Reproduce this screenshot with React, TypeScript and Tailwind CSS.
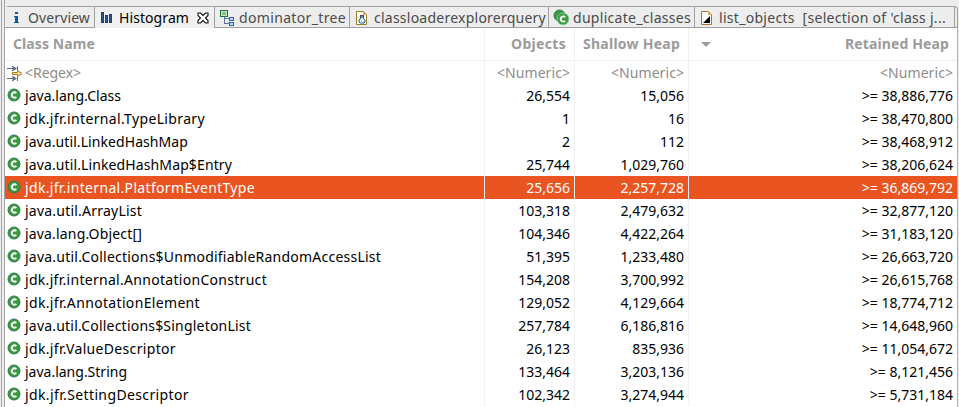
import { useLayoutEffect, useRef, type ReactNode } from "react";

// Spreads or tightens the letters so that a label takes exactly `w` pixels.
function Fit({ text, w }: { text: string; w: number }) {
  const ref = useRef<HTMLSpanElement>(null);
  useLayoutEffect(() => {
    const el = ref.current;
    if (!el) return;
    el.style.letterSpacing = "0px";
    const natural = el.getBoundingClientRect().width;
    const gap = (w - natural) / text.length;
    el.style.letterSpacing = `${gap}px`;
  }, [text, w]);
  return (
    <span ref={ref} className="inline-block whitespace-pre">
      {text}
    </span>
  );
}

function InfoIcon() {
  return (
    <svg width="16" height="16" viewBox="0 0 16 16" shapeRendering="crispEdges">
      <path d="M7 2h3v2H7zM6 6h4v6h1v1H6v-1h1V7H6z" fill="#14569f" />
    </svg>
  );
}

function HistogramIcon() {
  return (
    <svg width="16" height="16" viewBox="0 0 16 16" shapeRendering="crispEdges">
      <path d="M2 2h3v11H2zM6 5h3v8H6zM10 4h3v9h-3z" fill="#1d3c78" />
      <path d="M3 3h1v9H3zM7 6h1v6H7zM11 5h1v7h-1z" fill="#345c9c" />
    </svg>
  );
}

function CloseIcon() {
  return (
    <svg width="12" height="12" viewBox="0 0 12 12" fill="#fff" stroke="#111" strokeWidth="1.100">
      <path d="M1 1h2.500L6 3.500 8.500 1H11v2.500L8.500 6 11 8.500V11H8.500L6 8.500 3.500 11H1V8.500L3.500 6 1 3.500z" />
    </svg>
  );
}

function TreeIcon() {
  return (
    <svg width="16" height="16" viewBox="0 0 16 16">
      <path d="M5.500 7v7M5.500 8.500H10M5.500 13.500H10" fill="none" stroke="#60728f" />
      <rect x="1.500" y="0.500" width="7" height="6" fill="#c4e8c6" stroke="#27713c" />
      <rect x="3" y="2" width="4" height="3" fill="#7cc284" />
      <rect x="10.500" y="7.500" width="4" height="3" fill="#b8def8" stroke="#2b62b5" />
      <rect x="10.500" y="12.500" width="4" height="3" fill="#b8def8" stroke="#2b62b5" />
    </svg>
  );
}

function QueryIcon() {
  return (
    <svg width="16" height="16" viewBox="0 0 16 16">
      <path d="M2.500 1.500h7l3 3v10h-10z" fill="#fff" stroke="#9c7a2c" />
      <path d="M9 1l4 4H9z" fill="#d9b35f" />
      <path d="M6 5h4v3H6z" fill="#7b3b22" />
      <path d="M7 6h2v2l2 2v2l-1 1H6l-1-1v-2l2-2z" fill="#d6ecff" stroke="#245a9c" />
    </svg>
  );
}

function ObjectsIcon() {
  return (
    <svg width="16" height="16" viewBox="0 0 16 16">
      <path d="M2.500 1.500h7l3 3v10h-10z" fill="#fff" stroke="#9c7a2c" />
      <path d="M9 1l4 4H9z" fill="#d9b35f" />
      <path d="M11 6v7H4z" fill="#000" />
    </svg>
  );
}

function ClassIcon() {
  return (
    <svg className="-mt-0.5" width="14" height="14" viewBox="0 0 14 14">
      <circle cx="7" cy="7" r="6" fill="#3c9a45" stroke="#2b7a4b" />
      <path d="M9.300 5.100A2.600 2.700 0 1 0 9.300 8.900" fill="none" stroke="#fff" strokeWidth="1.900" />
    </svg>
  );
}

function ClassesIcon() {
  return (
    <svg className="shrink-0" width="17" height="17" viewBox="0 0 17 17">
      <circle cx="6.500" cy="6.500" r="5.500" fill="#3c9a45" stroke="#2b7a4b" />
      <circle cx="10" cy="10" r="6" fill="#3c9a45" stroke="#a5d3a8" strokeWidth="0.700" />
      <path d="M12.200 8.100A2.600 2.700 0 1 0 12.200 11.900" fill="none" stroke="#fff" strokeWidth="1.800" />
    </svg>
  );
}

function FilterIcon() {
  return (
    <svg width="16" height="16" viewBox="0 0 16 16" fill="none">
      <path d="M0 3.500h8M0 13.500h8M10.500 1v5M10.500 11v5M5.500 1v1.500M5.500 4.500V6M5.500 11v1.500M5.500 14.500V16" stroke="#5c6f86" />
      <path d="M6 1l4 2.500L6 6zM6 11l4 2.500L6 16z" fill="#5c6f86" />
      <path d="M5.500 7.500h5v-2l4.500 3-4.500 3v-2h-5z" fill="#f7e09a" stroke="#ac7d20" />
    </svg>
  );
}

type TabProps = { icon: ReactNode; text: string; w: number; box: string; active?: boolean; close?: boolean };

function Tab({ icon, text, w, box, active, close }: TabProps) {
  return (
    <div
      className={`flex h-full shrink-0 items-center border-r border-[#a0a0a0] pt-px ${box} ${
        active ? "bg-[#f0f0f0] text-black" : "border-b bg-[#ededed] text-[#4a4a4a]"
      }`}
    >
      <span className="flex w-5 shrink-0 items-center">{icon}</span>
      <Fit text={text} w={w} />
      {close && (
        <span className="ml-2">
          <CloseIcon />
        </span>
      )}
    </div>
  );
}

const rows: [string, number, string, string, string][] = [
  ["java.lang.Class", 96, "26,554", "15,056", "38,886,776"],
  ["jdk.jfr.internal.TypeLibrary", 180, "1", "16", "38,470,800"],
  ["java.util.LinkedHashMap", 163, "2", "112", "38,468,912"],
  ["java.util.LinkedHashMap$Entry", 207, "25,744", "1,029,760", "38,206,624"],
  ["jdk.jfr.internal.PlatformEventType", 230, "25,656", "2,257,728", "36,869,792"],
  ["java.util.ArrayList", 117, "103,318", "2,479,632", "32,877,120"],
  ["java.lang.Object[]", 117, "104,346", "4,422,264", "31,183,120"],
  ["java.util.Collections$UnmodifiableRandomAccessList", 356, "51,395", "1,233,480", "26,663,720"],
  ["jdk.jfr.internal.AnnotationConstruct", 242, "154,208", "3,700,992", "26,615,768"],
  ["jdk.jfr.AnnotationElement", 175, "129,052", "4,129,664", "18,774,712"],
  ["java.util.Collections$SingletonList", 226, "257,784", "6,186,816", "14,648,960"],
  ["jdk.jfr.ValueDescriptor", 151, "26,123", "835,936", "11,054,672"],
  ["java.lang.String", 102, "133,464", "3,203,136", "8,121,456"],
  ["jdk.jfr.SettingDescriptor", 164, "102,342", "3,274,944", "5,731,184"],
];

const grid = "grid grid-cols-[479px_90px_114px_1fr]";
const cell = "flex items-center justify-end border-l border-[#f1f1f1] pr-1";
const headCell = "flex items-center border-l border-[#f1f1f1] pr-2";

export default function App() {
  return (
    <div className="flex h-[407px] w-[959px] overflow-hidden bg-[#ededed] pr-px font-['Noto_Sans',sans-serif] text-sm leading-none">
      <div className="ml-px w-1 shrink-0 border-x border-x-[#a6a6a6]" />
      <div className="flex min-w-0 flex-1 flex-col pt-1.5">
        <div className="flex h-[22px] shrink-0 rounded-t border-t border-r border-[#a0a0a0]">
          <Tab icon={<InfoIcon />} text="Overview" w={62} box="w-[90px] pl-[3px]" />
          <Tab icon={<HistogramIcon />} text="Histogram" w={70} box="w-[120px] pl-1" active close />
          <Tab icon={<TreeIcon />} text="dominator_tree" w={107} box="w-[135px] pl-1" />
          <Tab icon={<QueryIcon />} text="classloaderexplorerquery" w={172} box="w-[199px] pl-1" />
          <Tab icon={<ClassesIcon />} text="duplicate_classes" w={118} box="w-[146px] pl-1" />
          <Tab icon={<ObjectsIcon />} text="list_objects  [selection of 'class j..." w={227} box="w-[260px] pl-1" />
          <div className="flex-1 border-b border-[#a0a0a0]" />
        </div>
        <div className="flex flex-1 flex-col border-r border-[#b0b0b0] bg-white">
          <div className={`${grid} h-[33px] shrink-0 border-b border-[#f1f1f1] font-bold text-[#9b9b9b]`}>
            <div className="flex items-center pl-2">
              <Fit text="Class Name" w={82} />
            </div>
            <div className={`${headCell} justify-end`}>
              <Fit text="Objects" w={55} />
            </div>
            <div className={`${headCell} justify-end`}>
              <Fit text="Shallow Heap" w={97} />
            </div>
            <div className={`${headCell} justify-between pl-3`}>
              <svg width="10" height="5" viewBox="0 0 10 5">
                <path d="M0 0h10L5 5z" fill="#9b9b9b" />
              </svg>
              <Fit text="Retained Heap" w={104} />
            </div>
          </div>
          <div className={`${grid} h-[23px] shrink-0 text-[#8c8c8c]`}>
            <div className="flex items-center gap-0.5 pl-0.5">
              <FilterIcon />
              <Fit text="<Regex>" w={56} />
            </div>
            <div className={cell}>
              <Fit text="<Numeric>" w={73} />
            </div>
            <div className={cell}>
              <Fit text="<Numeric>" w={73} />
            </div>
            <div className={cell}>
              <Fit text="<Numeric>" w={73} />
            </div>
          </div>
          {rows.map(([name, w, objects, shallow, retained], i) => (
            <div
              key={name}
              className={`${grid} h-[23px] shrink-0 ${i === 4 ? "bg-[#e95420] text-white" : "text-black"}`}
            >
              <div className="flex items-center gap-1 pl-0.5">
                <ClassIcon />
                <Fit text={name} w={w} />
              </div>
              <div className={cell}>{objects}</div>
              <div className={cell}>{shallow}</div>
              <div className={cell}>{`>= ${retained}`}</div>
            </div>
          ))}
        </div>
      </div>
    </div>
  );
}
